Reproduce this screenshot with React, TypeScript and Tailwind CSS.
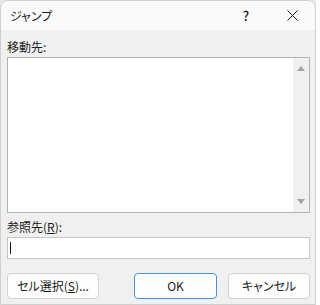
import React from "react"

function Button({ children, primary, className }: { children: React.ReactNode; primary?: boolean; className?: string }) {
  return (
    <button
      className={`h-[26px] rounded-[4px] bg-[#fdfdfd] text-[12px] text-[#1b1b1b] flex items-center justify-center ${
        primary ? "border border-[#4a90d9]" : "border border-[#d3d3d3]"
      } ${className ?? ""}`}
    >
      {children}
    </button>
  )
}

export default function App() {
  return (
    <div
      className="w-[316px] h-[305px] bg-[#e9e9e9] overflow-hidden [font-feature-settings:'palt']"
      style={{ fontFamily: '"Noto Sans CJK JP", "Noto Sans", sans-serif' }}
    >
      <div className="w-[316px] h-[305px] rounded-t-[8px] border border-[#cfcfcf] overflow-hidden flex flex-col bg-[#f0f0f0]">
        {/* title bar */}
        <div className="h-[29px] bg-[#fafafa] flex items-center">
          <span className="pl-[9px] text-[12px] text-[#1b1b1b] flex-1">ジャンプ</span>
          <div className="w-[46px] h-full flex items-center justify-center text-[13px] font-medium text-[#1b1b1b]">?</div>
          <div className="w-[46px] h-full flex items-center justify-center">
            <svg width="11" height="11" viewBox="0 0 11 11" fill="none" stroke="#1b1b1b" strokeWidth="1">
              <path d="M0.5 0.5 L10.5 10.5 M10.5 0.5 L0.5 10.5" />
            </svg>
          </div>
        </div>

        {/* body */}
        <div className="flex-1 flex flex-col pl-[6px] pr-[5px] pt-[8px]">
          <div className="h-[18px] leading-[18px] text-[12px] text-[#1b1b1b] mb-[1px]">移動先:</div>
          <div className="h-[156px] bg-white border border-[#b4b4b4] flex">
            <div className="flex-1" />
            <div className="w-[16px] bg-[#f0f0f0] flex flex-col items-center justify-between py-[8px]">
              <svg width="8" height="5" viewBox="0 0 8 5">
                <path d="M0 5 L4 0 L8 5 Z" fill="#a3a3a3" />
              </svg>
              <svg width="8" height="5" viewBox="0 0 8 5">
                <path d="M0 0 L8 0 L4 5 Z" fill="#a3a3a3" />
              </svg>
            </div>
          </div>
          <div className="pt-[5px] pb-[1px] h-[24px] leading-[18px] text-[12px] text-[#1b1b1b]">
            参照先(<span className="underline">R</span>):
          </div>
          <div className="h-[22px] bg-white border border-[#c6c6c6] flex items-center pl-[2px]">
            <div className="w-[1px] h-[12px] bg-[#1b1b1b]" />
          </div>
          <div className="mt-[14px] flex">
            <Button className="w-[92px]">
              セル選択(<span className="underline">S</span>)...
            </Button>
            <div className="flex-1" />
            <Button primary className="w-[83px]">OK</Button>
            <Button className="w-[82px] ml-[11px]">キャンセル</Button>
          </div>
        </div>
      </div>
    </div>
  )
}
